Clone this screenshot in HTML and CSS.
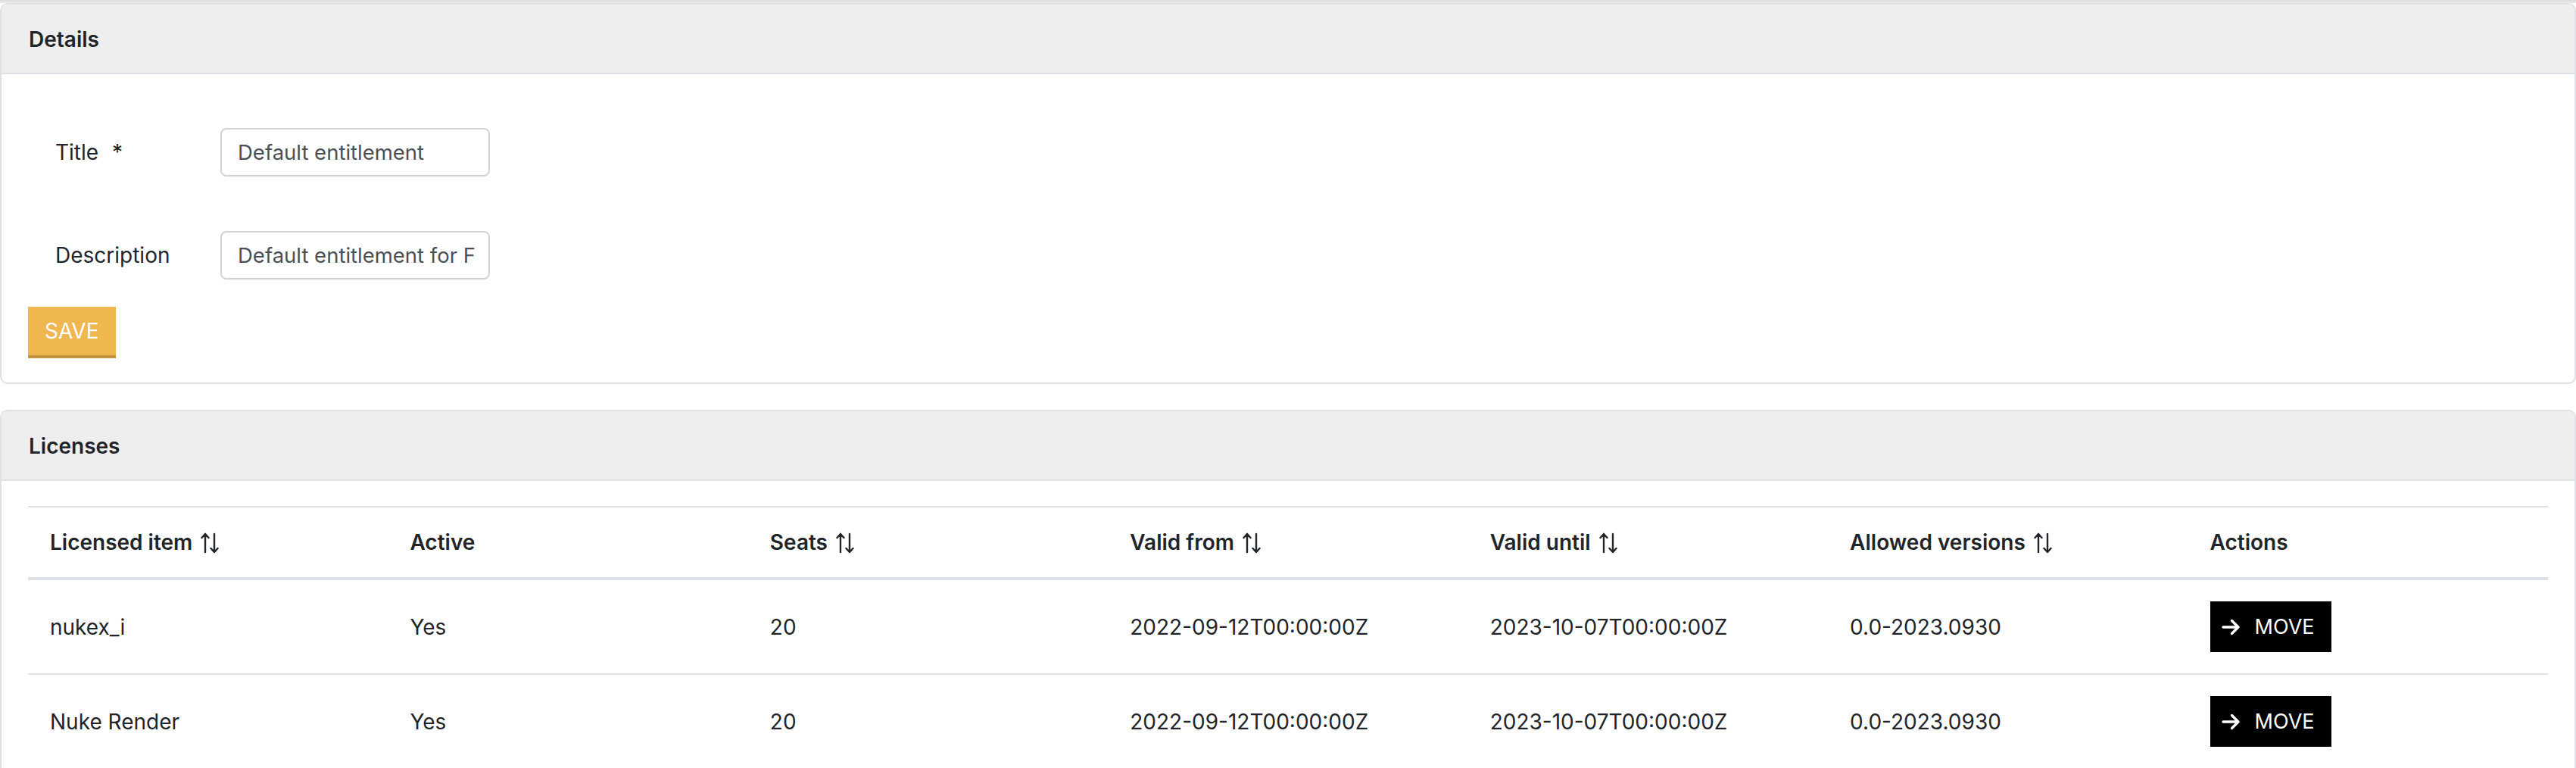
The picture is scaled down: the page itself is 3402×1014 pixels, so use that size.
FILE: index.html
```html
<!DOCTYPE html>
<html lang="en">
<head>
<meta charset="utf-8">
<title>Entitlement details</title>
<link rel="stylesheet" href="styles.css">
</head>
<body>
<div class="topbar"></div>
<section class="card">
  <div class="card-header">Details</div>
  <div class="card-body">
    <form class="form">
      <div class="form-row first">
        <label class="form-label" for="title">Title <span class="req">*</span></label>
        <input class="form-input" id="title" type="text" value="Default entitlement">
      </div>
      <div class="form-row">
        <label class="form-label" for="desc">Description</label>
        <input class="form-input" id="desc" type="text" value="Default entitlement for F">
      </div>
      <button type="button" class="btn-save">SAVE</button>
    </form>
  </div>
</section>

<section class="card licenses">
  <div class="card-header">Licenses</div>
  <div class="card-body">
    <table class="table">
      <thead>
        <tr>
          <th>Licensed item <svg class="sort" viewBox="0 0 24 28"><path d="M6 26V2M1.5 7L6 2L10.5 7M18 2V26M13.5 21L18 26L22.5 21"/></svg></th>
          <th>Active</th>
          <th>Seats <svg class="sort" viewBox="0 0 24 28"><path d="M6 26V2M1.5 7L6 2L10.5 7M18 2V26M13.5 21L18 26L22.5 21"/></svg></th>
          <th>Valid from <svg class="sort" viewBox="0 0 24 28"><path d="M6 26V2M1.5 7L6 2L10.5 7M18 2V26M13.5 21L18 26L22.5 21"/></svg></th>
          <th>Valid until <svg class="sort" viewBox="0 0 24 28"><path d="M6 26V2M1.5 7L6 2L10.5 7M18 2V26M13.5 21L18 26L22.5 21"/></svg></th>
          <th>Allowed versions <svg class="sort" viewBox="0 0 24 28"><path d="M6 26V2M1.5 7L6 2L10.5 7M18 2V26M13.5 21L18 26L22.5 21"/></svg></th>
          <th>Actions</th>
        </tr>
      </thead>
      <tbody>
        <tr>
          <td>nukex_i</td>
          <td>Yes</td>
          <td>20</td>
          <td>2022-09-12T00:00:00Z</td>
          <td>2023-10-07T00:00:00Z</td>
          <td>0.0-2023.0930</td>
          <td><button type="button" class="btn-move"><svg class="arrow" viewBox="0 0 25 22"><path d="M2 11H22M13.5 2.5L22 11L13.5 19.5"/></svg>MOVE</button></td>
        </tr>
        <tr>
          <td>Nuke Render</td>
          <td>Yes</td>
          <td>20</td>
          <td>2022-09-12T00:00:00Z</td>
          <td>2023-10-07T00:00:00Z</td>
          <td>0.0-2023.0930</td>
          <td><button type="button" class="btn-move"><svg class="arrow" viewBox="0 0 25 22"><path d="M2 11H22M13.5 2.5L22 11L13.5 19.5"/></svg>MOVE</button></td>
        </tr>
      </tbody>
    </table>
  </div>
</section>
</body>
</html>
```

FILE: styles.css
```css
* { box-sizing: border-box; }

html, body {
  margin: 0;
  padding: 0;
  background: #ffffff;
}

body {
  font-family: Inter, "Noto Sans", "Liberation Sans", sans-serif;
  font-size: 28px;
  line-height: 42px;
  color: #212529;
}

.topbar {
  height: 4px;
  background: linear-gradient(#dcdcdc, #ebebeb);
}

.card {
  border: 2px solid #dee2e6;
  border-radius: 10px;
  overflow: hidden;
  background: #fff;
}

.card.licenses {
  margin-top: 34px;
}

.card-header {
  background: #eeeeee;
  border-bottom: 2px solid #dee2e6;
  padding: 25px 36px 23px;
  font-weight: 600;
}

.card-body {
  padding: 36px 35px 32px;
}

.licenses .card-body {
  padding-top: 33px;
}

.form-row {
  display: flex;
  align-items: center;
  padding: 36px 0 36px 36px;
}

.form-row.first {
  padding-top: 35px;
  padding-bottom: 36px;
}

.form-label {
  width: 218px;
  flex: none;
}

.req {
  margin-left: 10px;
}

.form-input {
  width: 356px;
  height: 64px;
  border: 2px solid #ced4da;
  border-radius: 8px;
  padding: 0 18px 0 21px;
  font-family: inherit;
  font-size: 27.5px;
  color: #495057;
  background: #fff;
  outline: none;
}

.btn-save {
  display: block;
  height: 68px;
  padding: 0 22px;
  border: 0;
  border-bottom: 4px solid #c4933c;
  border-radius: 0;
  background: #f0b650;
  color: #fff;
  font-family: inherit;
  font-size: 28px;
  line-height: 64px;
}

.table {
  width: 100%;
  table-layout: fixed;
  border-collapse: collapse;
  border-top: 2px solid #dee2e6;
}

.table th {
  text-align: left;
  font-weight: 600;
  padding: 25px 29px;
  border-bottom: 4px solid #dee2e6;
  white-space: nowrap;
}

.table td {
  padding: 28px 29px;
  height: 125px;
  border-bottom: 2px solid #dee2e6;
  vertical-align: middle;
  white-space: nowrap;
}

.sort {
  width: 24px;
  height: 28px;
  vertical-align: -5px;
  margin-left: 4px;
  fill: none;
  stroke: #212529;
  stroke-width: 2.4;
  stroke-linecap: round;
  stroke-linejoin: round;
}

.btn-move {
  display: inline-flex;
  align-items: center;
  height: 67px;
  padding: 0 22px 0 15px;
  border: 0;
  border-radius: 0;
  background: #000;
  color: #fff;
  font-family: inherit;
  font-size: 27px;
}

.arrow {
  width: 25px;
  height: 22px;
  margin-right: 19px;
  fill: none;
  stroke: #fff;
  stroke-width: 3.4;
  stroke-linecap: round;
  stroke-linejoin: round;
}
```
